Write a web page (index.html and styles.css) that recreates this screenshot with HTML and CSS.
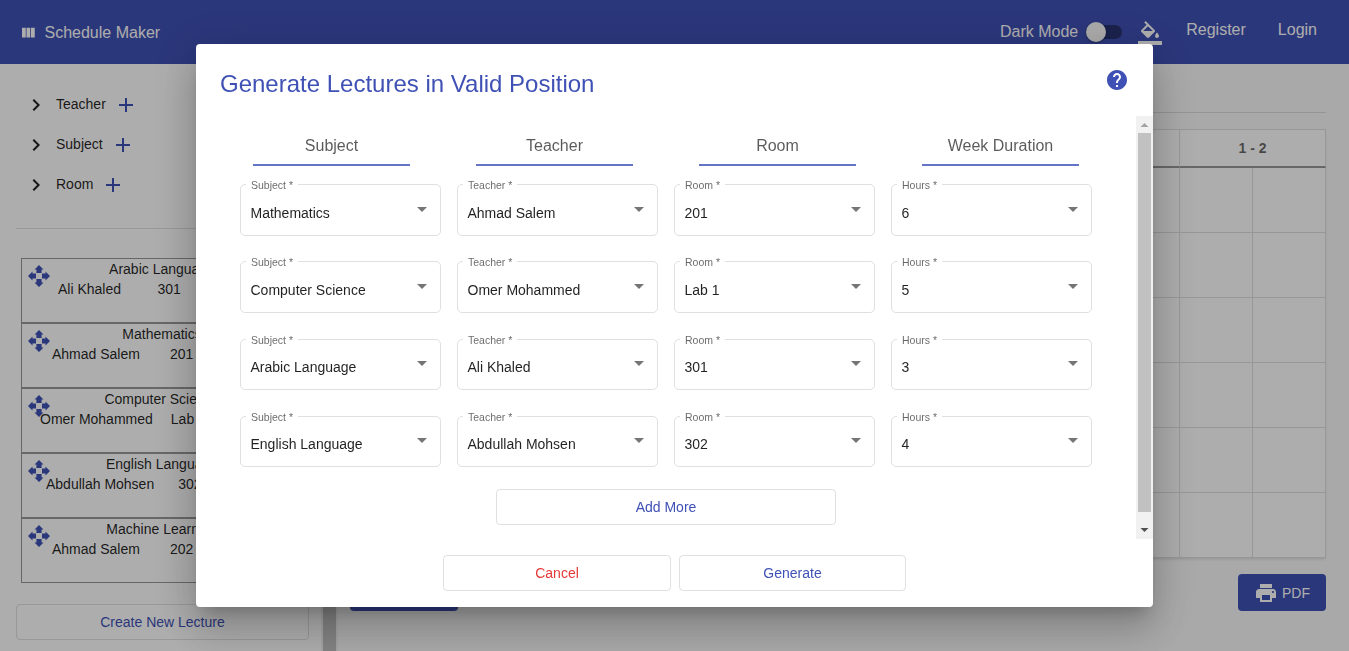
FILE: index.html
```html
<!DOCTYPE html>
<html lang="en">
<head>
<meta charset="utf-8">
<title>Schedule Maker</title>
<link rel="stylesheet" href="styles.css">
</head>
<body>
<header class="toolbar">
  <svg class="logo" viewBox="0 0 24 24"><path d="M10 18h5V5h-5v13zm-6 0h5V5H4v13zM16 5v13h5V5h-5z"/></svg>
  <span class="brand">Schedule Maker</span>
  <span class="mode">Dark Mode</span>
  <span class="toggle"><span class="thumb"></span></span>
  <svg class="fill-icon" viewBox="0 0 24 24"><path d="M16.56 8.94L7.62 0 6.21 1.41l2.38 2.38-5.15 5.15c-.59.59-.59 1.54 0 2.12l5.5 5.5c.29.29.68.44 1.06.44s.77-.15 1.06-.44l5.5-5.5c.59-.58.59-1.53 0-2.12zM5.21 10L10 5.21 14.79 10H5.21zM19 11.5s-2 2.17-2 3.5c0 1.1.9 2 2 2s2-.9 2-2c0-1.33-2-3.5-2-3.5zM0 20h24v4H0z"/></svg>
  <a class="link register">Register</a>
  <a class="link">Login</a>
</header>
<div class="layout">
  <aside class="sidebar">
    <div class="sidebar-body">
      <ul class="tree" id="tree"></ul>
      <div class="lectures" id="lectures"></div>
      <button class="btn create">Create New Lecture</button>
    </div>
    <div class="side-scroll"><div class="side-thumb"></div></div>
  </aside>
  <main class="main">
    <div class="rule"></div>
    <div class="table" id="table"></div>
    <div class="actions"><span class="solid wide"></span><span class="solid pdf"><svg class="icon" viewBox="0 0 24 24"><path d="M19 8H5c-1.66 0-3 1.34-3 3v6h4v4h12v-4h4v-6c0-1.66-1.34-3-3-3zm-3 11H8v-5h8v5zm3-7c-.55 0-1-.45-1-1s.45-1 1-1 1 .45 1 1-.45 1-1 1zm-1-9H6v4h12V3z"/></svg>PDF</span></div>
  </main>
</div>
<div class="backdrop">
  <section class="dialog">
    <div class="dialog-head">
      <h1 class="title">Generate Lectures in Valid Position</h1>
      <svg class="icon help" viewBox="0 0 24 24"><path d="M12 2C6.48 2 2 6.48 2 12s4.48 10 10 10 10-4.48 10-10S17.52 2 12 2zm1 17h-2v-2h2v2zm2.07-7.75l-.9.92C13.45 12.9 13 13.5 13 15h-2v-.5c0-1.1.45-2.1 1.17-2.83l1.24-1.26c.37-.36.59-.86.59-1.41 0-1.1-.9-2-2-2s-2 .9-2 2H8c0-2.21 1.79-4 4-4s4 1.79 4 4c0 .88-.36 1.68-.93 2.25z"/></svg>
    </div>
    <div class="dialog-content">
      <div class="form">
        <div class="columns"><span class="column">Subject</span><span class="column">Teacher</span><span class="column">Room</span><span class="column">Week Duration</span></div>
        <div class="rows" id="rows"></div>
        <button class="btn add">Add More</button>
      </div>
      <div class="scroll">
        <svg class="arrow up" viewBox="0 0 17 17"><path d="M4.5 11h8l-4-4z"/></svg>
        <div class="scroll-thumb"></div>
        <svg class="arrow" viewBox="0 0 17 17"><path d="M4.5 6h8l-4 4z"/></svg>
      </div>
    </div>
    <div class="dialog-actions"><button class="btn cancel">Cancel</button><button class="btn generate">Generate</button></div>
  </section>
</div>
<script src="app.js"></script>
</body>
</html>
```
FILE: styles.css
```css
* { box-sizing: border-box; }
body {
  margin: 0;
  height: 651px;
  overflow: hidden;
  background: #fafafa;
  color: rgba(0, 0, 0, .87);
  font: 14px/20px "Liberation Sans", Arial, sans-serif;
}
svg { display: block; fill: currentColor; flex: none; }
.icon { width: 24px; height: 24px; }
.toolbar {
  display: flex;
  align-items: center;
  height: 64px;
  padding: 0 32px 0 19px;
  background: #3f51b5;
  color: #fff;
  font-size: 16px;
}
.logo { width: 18px; height: 18px; margin-top: 2px; }
.brand { margin: 2px 0 0 7.5px; }
.mode { margin: 0 8px 0 auto; }
.toggle {
  width: 36px;
  height: 14px;
  border-radius: 7px;
  background: rgba(0, 0, 0, .38);
}
.thumb {
  display: block;
  width: 20px;
  height: 20px;
  margin-top: -3px;
  border-radius: 50%;
  background: #fafafa;
  box-shadow: 0 1px 3px rgba(0, 0, 0, .3);
}
.fill-icon { width: 24px; height: 24px; margin: 2px 24px 0 16px; }
.link { margin-top: -4px; }
.register { margin-right: 32px; }
.layout { display: flex; height: 587px; }
.sidebar { display: flex; width: 338px; background: #fff; }
.sidebar-body { width: 321px; padding: 20px 12px 0 16px; }
.tree {
  margin: 0 0 29px;
  padding: 0 0 24px;
  list-style: none;
  border-bottom: 1px solid rgba(0, 0, 0, .12);
}
.tree-item { display: flex; align-items: center; height: 40px; padding-left: 8px; }
.tree-item .icon { margin-top: 2px; }
.tree-name { margin: 0 8px; }
.plus { color: #3f51b5; }
.lectures { margin: 0 7px 0 5px; }
.lecture {
  display: flex;
  height: 65px;
  border: 1px solid #999;
}
.move { width: 24px; height: 24px; margin: 5px 0 0 5px; color: #3f51b5; }
.lecture-text { width: 100%; margin-left: -29px; }
.lecture-name { padding-left: 1px; text-align: center; }
.lecture-info { display: flex; justify-content: flex-start; white-space: nowrap; }
.lecture:nth-child(1) .lecture-info { gap: 36.5px; padding-left: 36px; }
.lecture:nth-child(2) .lecture-info,
.lecture:nth-child(5) .lecture-info { gap: 30px; padding-left: 30px; }
.lecture:nth-child(3) .lecture-info { gap: 18px; padding-left: 18px; }
.lecture:nth-child(4) .lecture-info { gap: 24px; padding-left: 24px; }
.btn {
  height: 36px;
  padding: 0;
  border: 1px solid rgba(0, 0, 0, .12);
  border-radius: 4px;
  background: transparent;
  color: #3f51b5;
  font: inherit;
}
.create { display: block; width: 293px; margin-top: 21px; }
.side-scroll { width: 17px; padding: 0 2px; background: #f1f1f1; }
.side-thumb { height: 100%; background: #c1c1c1; }
.main { width: 976px; margin-left: 12px; padding-top: 48px; }
.rule { height: 1px; margin-bottom: 16px; background: rgba(0, 0, 0, .12); }
.table {
  display: grid;
  grid-template-columns: 100px repeat(12, 73px);
  grid-template-rows: 38px repeat(6, 65px);
  border-top: 1px solid #dfdfdf;
  background: #fff;
  box-shadow: 0 2px 3px -1px rgba(0, 0, 0, .15);
}
.cell { border-right: 1px solid #dfdfdf; border-bottom: 1px solid #dfdfdf; }
.head {
  border-right: 1px solid #dfdfdf;
  border-bottom: 2px solid #999;
  color: rgba(0, 0, 0, .6);
  font-weight: bold;
  line-height: 37px;
  text-align: center;
}
.slot { grid-column: span 2; }
.actions { display: flex; justify-content: space-between; margin-top: 16px; }
.solid { height: 37px; border-radius: 4px; background: #3f51b5; }
.wide { width: 108px; }
.pdf { display: flex; align-items: center; gap: 4px; width: 88px; padding-left: 16px; color: #fff; }
.backdrop {
  position: fixed;
  inset: 0;
  display: flex;
  align-items: center;
  justify-content: center;
  background: rgba(0, 0, 0, .32);
}
.dialog {
  width: 957px;
  height: 563px;
  border-radius: 4px;
  background: #fff;
  box-shadow: 0 11px 15px -7px rgba(0, 0, 0, .2), 0 24px 38px 3px rgba(0, 0, 0, .14), 0 9px 46px 8px rgba(0, 0, 0, .12);
}
.dialog-head {
  display: flex;
  justify-content: space-between;
  height: 72px;
  padding: 24px 24px 0;
  color: #3f51b5;
}
.title { margin: 0; font-size: 24px; font-weight: 400; line-height: 32px; }
.dialog-content { display: flex; height: 423px; }
.form { width: 940px; padding: 16px 44px 0; }
.columns { display: flex; gap: 66px; padding-left: 13px; }
.column {
  width: 157px;
  height: 34px;
  border-bottom: 2px solid #6574c4;
  color: rgba(0, 0, 0, .65);
  font-size: 16px;
  line-height: 28px;
  text-align: center;
}
.rows {
  display: grid;
  grid-template-columns: repeat(4, 201px);
  grid-template-rows: 58px 59px 58px 57px;
  align-items: start;
  gap: 19px 16px;
  margin-top: 12px;
}
.field {
  min-width: 0;
  height: 58px;
  margin: 0;
  padding: 0 13px 0 9.5px;
  border: 1px solid rgba(0, 0, 0, .12);
  border-radius: 5px;
}
.label {
  height: 12px;
  margin-left: -4.5px;
  padding: 1px 5px 0;
  color: rgba(0, 0, 0, .6);
  font-size: 10.5px;
  line-height: 12px;
}
.select { display: flex; justify-content: space-between; padding-top: 13px; }
.field:nth-child(n+9) { height: 57px; }
.field:nth-child(n+9) .select { padding-top: 12px; }
.caret {
  width: 0;
  height: 0;
  margin-top: 4px;
  border: 5px solid transparent;
  border-top-color: rgba(0, 0, 0, .54);
  border-bottom: 0;
}
.add { display: block; width: 340px; margin: 22px 0 0 256px; }
.scroll { display: flex; flex-direction: column; align-items: center; width: 17px; background: #f1f1f1; }
.scroll-thumb { width: 13px; height: 379px; background: #c1c1c1; }
.arrow { width: 17px; height: 17px; margin-top: auto; color: #505050; }
.up { margin-top: 0; color: #a3a3a3; }
.dialog-actions { display: flex; justify-content: center; gap: 8px; padding: 16px 0 0; }
.cancel { width: 228px; color: #e53935; }
.generate { width: 227px; }
```
FILE: app.js
```js
const icons = {
  chevron: 'M10 6L8.59 7.41 13.17 12l-4.58 4.59L10 18l6-6z',
  add: 'M19 13h-6v6h-2v-6H5v-2h6V5h2v6h6v2z',
  move: 'M12 1l4.5 4.5H14.6V9H9.4V5.500H7.500zM12 23l4.500-4.500H14.600V15H9.400v3.500H7.500zM1 12l4.500-4.500V9.400H9v5.200H5.500v1.900zM23 12l-4.500-4.500V9.400H15v5.200h3.500v1.900z'
};
const svg = (cls, d) => `<svg class="${cls}" viewBox="0 0 24 24"><path d="${d}"/></svg>`;
const fill = (id, html) => { document.getElementById(id).innerHTML = html; };

fill('tree', ['Teacher', 'Subject', 'Room'].map(name =>
  `<li class="tree-item">${svg('icon', icons.chevron)}<span class="tree-name">${name}</span>${svg('icon plus', icons.add)}</li>`).join(''));

fill('lectures', [
  ['Arabic Language', 'Ali Khaled', '301'],
  ['Mathematics', 'Ahmad Salem', '201'],
  ['Computer Science', 'Omer Mohammed', 'Lab 1'],
  ['English Language', 'Abdullah Mohsen', '302'],
  ['Machine Learning', 'Ahmad Salem', '202']
].map(([name, teacher, room]) =>
  `<div class="lecture">${svg('move', icons.move)}<div class="lecture-text"><div class="lecture-name">${name}</div><div class="lecture-info"><span>${teacher}</span><span>${room}</span></div></div></div>`).join(''));

let table = '<div class="head"></div>';
for (let i = 0; i < 6; i++) table += `<div class="head slot">${i === 5 ? '1 - 2' : ''}</div>`;
for (let i = 0; i < 6 * 13; i++) table += '<div class="cell"></div>';
fill('table', table);

const labels = ['Subject', 'Teacher', 'Room', 'Hours'];
fill('rows', [
  ['Mathematics', 'Ahmad Salem', '201', '6'],
  ['Computer Science', 'Omer Mohammed', 'Lab 1', '5'],
  ['Arabic Language', 'Ali Khaled', '301', '3'],
  ['English Language', 'Abdullah Mohsen', '302', '4']
].map(row => row.map((value, i) =>
  `<fieldset class="field"><legend class="label">${labels[i]} *</legend><div class="select"><span>${value}</span><span class="caret"></span></div></fieldset>`).join('')).join(''));
```
